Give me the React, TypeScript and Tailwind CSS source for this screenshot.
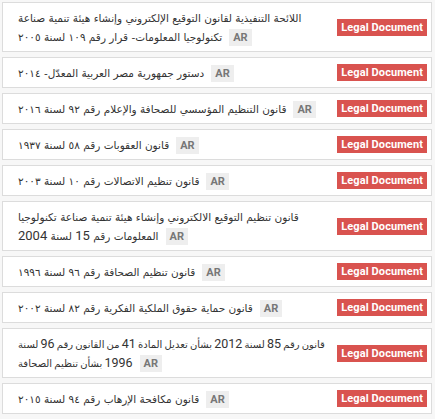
import React from 'react';

type Doc = { lines: string[]; tight?: boolean };

// each entry is the title split into its visible lines
const docs: Doc[] = [
  {
    lines: [
      'اللائحة التنفيذية لقانون التوقيع الإلكتروني وإنشاء هيئة تنمية صناعة',
      'تكنولوجيا المعلومات- قرار رقم ١٠٩ لسنة ٢٠٠٥',
    ],
  },
  { lines: ['دستور جمهورية مصر العربية المعدّل- ٢٠١٤'] },
  { lines: ['قانون التنظيم المؤسسي للصحافة والإعلام رقم ٩٢ لسنة ٢٠١٦'] },
  { lines: ['قانون العقوبات رقم ٥٨ لسنة ١٩٣٧'] },
  { lines: ['قانون تنظيم الاتصالات رقم ١٠ لسنة ٢٠٠٣'] },
  {
    lines: [
      'قانون تنظيم التوقيع الالكتروني وإنشاء هيئة تنمية صناعة تكنولوجيا',
      'المعلومات رقم 15 لسنة 2004',
    ],
  },
  { lines: ['قانون تنظيم الصحافة رقم ٩٦ لسنة ١٩٩٦'] },
  { lines: ['قانون حماية حقوق الملكية الفكرية رقم ٨٢ لسنة ٢٠٠٢'] },
  {
    lines: [
      'قانون رقم 85 لسنة 2012 بشأن تعديل المادة 41 من القانون رقم 96 لسنة',
      '1996 بشأن تنظيم الصحافة',
    ],
    tight: true,
  },
  { lines: ['قانون مكافحة الإرهاب رقم ٩٤ لسنة ٢٠١٥'] },
];

// latin digits come from Roboto, the arabic script from the DejaVu fallback
const Line = ({ text, tight }: { text: string; tight?: boolean }) => (
  <span dir="rtl" className={tight ? 'whitespace-nowrap [word-spacing:-1px]' : 'whitespace-nowrap'}>
    {text.split(/([0-9]+)/).map((part, i) =>
      /^[0-9]+$/.test(part) ? (
        <span
          key={i}
          className={
            tight
              ? "font-['Roboto',sans-serif] text-[12.5px] leading-none"
              : "font-['Roboto',sans-serif] text-[13px] leading-none"
          }
        >
          {part}
        </span>
      ) : (
        <span
          key={i}
          className={
            tight
              ? "font-['DejaVu_Sans',sans-serif] text-[10px] leading-none"
              : "font-['DejaVu_Sans',sans-serif] text-[10.5px] leading-none"
          }
        >
          {part}
        </span>
      )
    )}
  </span>
);

export default function App() {
  return (
    <div className="min-h-screen bg-[#f7f7f7] pl-[2px] pr-[3px] pt-[2px] font-['Roboto',sans-serif]">
      <div className="flex flex-col gap-[5px]">
        {docs.map((doc, i) => (
          <div
            key={i}
            className="flex items-center bg-white border border-[#dcdcdc] pl-[15px] pr-[4px] py-[5px]"
          >
            <div className="flex-1 min-w-0 text-[13px] leading-[19px] text-[#333]">
              {doc.lines.map((line, j) => (
                <React.Fragment key={j}>
                  {j > 0 && <br />}
                  <Line text={line} tight={doc.tight} />
                </React.Fragment>
              ))}
              <span className="inline-block ml-[7px] px-[4px] bg-[#eeeeee] text-[#777] text-[11px] font-bold leading-[17px] align-baseline">
                AR
              </span>
            </div>
            <span className="shrink-0 bg-[#d9534f] text-white text-[11px] font-bold leading-[17px] px-[4px] tracking-[0.1px]">
              Legal Document
            </span>
          </div>
        ))}
      </div>
    </div>
  );
}
